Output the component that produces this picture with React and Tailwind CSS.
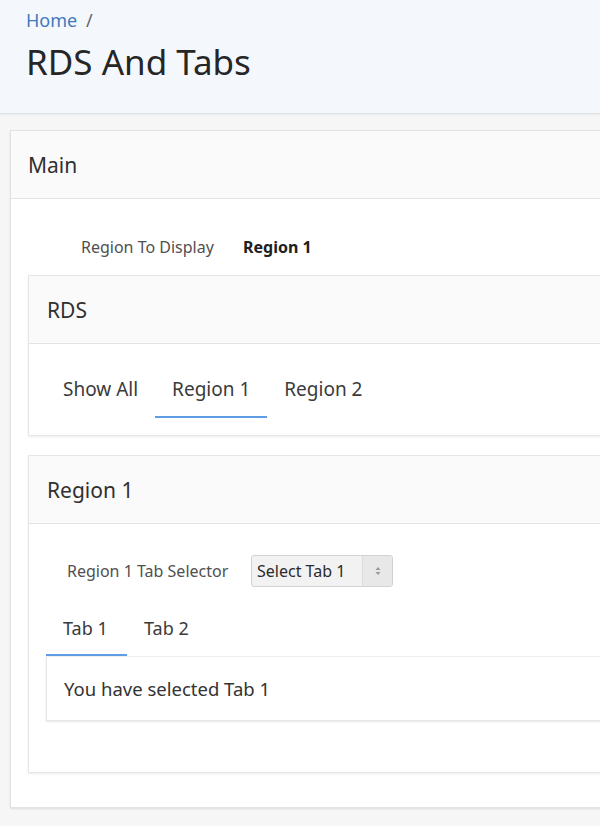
import React from "react";

function Card({ title, children, className = "" }) {
  return (
    <div className={"bg-white border border-[#e6e6e6] shadow-[0_1px_2px_rgba(0,0,0,0.08)] " + className}>
      <div className="h-[68px] bg-[#fafafa] border-b border-[#e3e3e3] flex items-center pl-[18px] pt-[2px] text-[21px] text-[#303030]">
        {title}
      </div>
      {children}
    </div>
  );
}

export default function App() {
  return (
    <div
      className="w-[600px] h-[826px] overflow-hidden bg-[#f6f6f6]"
      style={{ fontFamily: '"Noto Sans", "Open Sans", sans-serif' }}
    >
      <div className="h-[114px] bg-[#f4f8fd] border-b border-[#dfe3e8] shadow-[0_1px_2px_rgba(0,0,0,0.06)] pl-[26px] pt-[6px]">
        <div className="text-[18px] text-[#3f7abd] leading-[28px]">
          Home <span className="text-[#666] ml-[4px]">/</span>
        </div>
        <div className="text-[35px] text-[#262626] leading-[48px] mt-[4px]">RDS And Tabs</div>
      </div>

      <div className="pt-[16px] pl-[10px]">
        <div className="w-[620px] bg-white border border-[#e3e3e3] shadow-[0_1px_2px_rgba(0,0,0,0.1)]">
          <div className="h-[68px] bg-[#fafafa] border-b border-[#e3e3e3] flex items-center pl-[17px] pt-[3px] text-[21px] text-[#303030]">
            Main
          </div>
          <div className="pl-[17px] pb-[34px]">
            <div className="h-[76px] flex items-center pl-[53px] pt-[20px]">
              <span className="text-[16px] text-[#505050] w-[162px]">Region To Display</span>
              <span className="text-[16px] font-bold text-[#202020]">Region 1</span>
            </div>

            <Card title="RDS">
              <div className="h-[91px] flex items-end pl-[17px] pb-[17px]">
                <div className="flex">
                  <div className="text-[19px] text-[#3a3a3a] px-[17px] h-[45px] pt-[2px]">Show All</div>
                  <div className="text-[19px] text-[#3a3a3a] px-[17px] h-[45px] pt-[2px] border-b-2 border-[#5e9ce4]">
                    Region 1
                  </div>
                  <div className="text-[19px] text-[#3a3a3a] px-[17px] h-[45px] pt-[2px]">Region 2</div>
                </div>
              </div>
            </Card>

            <Card title="Region 1" className="mt-[19px]">
              <div className="pl-[17px] pb-[51px]">
                <div className="flex items-center pt-[31px] pl-[21px]">
                  <span className="text-[16px] text-[#505050] w-[184px]">Region 1 Tab Selector</span>
                  <div className="flex h-[32px] w-[142px] border border-[#d2d2d2] rounded-[3px] bg-[#f2f2f2] overflow-hidden">
                    <div className="flex-1 flex items-center pl-[5px] text-[16px] text-[#2a2a2a]">Select Tab 1</div>
                    <div className="w-[30px] bg-[#e8e8e8] border-l border-[#dcdcdc] flex items-center justify-center">
                      <svg width="6" height="10" viewBox="0 0 6 10">
                        <path d="M3 1 L5.5 4 H0.5 Z M3 9 L5.5 6 H0.5 Z" fill="#9a9a9a" />
                      </svg>
                    </div>
                  </div>
                </div>
                <div className="flex mt-[20px]">
                  <div className="w-[81px] h-[49px] border-b-2 border-[#5e9ce4] text-[18px] text-[#3a3a3a] pl-[17px] pt-[8px]">
                    Tab 1
                  </div>
                  <div className="h-[49px] text-[18px] text-[#3a3a3a] pl-[17px] pt-[8px]">Tab 2</div>
                </div>
                <div className="h-[65px] border border-[#e6e6e6] border-t-[#eeeeee] shadow-[0_1px_2px_rgba(0,0,0,0.1)] flex items-center pl-[17px] text-[18.5px] text-[#333]">
                  You have selected Tab 1
                </div>
              </div>
            </Card>
          </div>
        </div>
      </div>
    </div>
  );
}
